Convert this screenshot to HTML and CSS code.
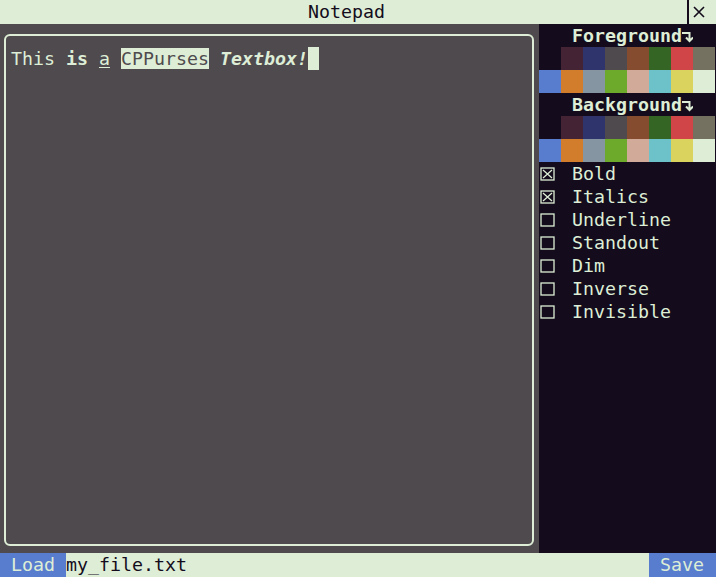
FILE: index.html
```html
<!DOCTYPE html>
<html>
<head>
<meta charset="utf-8">
<link rel="stylesheet" href="styles.css">
</head>
<body>
<div class="app">
  <header class="titlebar">
    <div class="title">Notepad</div>
    <div class="close"><svg width="12" height="12" viewBox="0 0 12 12"><path d="M1 1 L11 11 M11 1 L1 11" stroke="#140c1c" stroke-width="1.6" fill="none"/></svg></div>
  </header>
  <main class="middle">
    <section class="editor">
      <div class="textbox">
        <div class="line">This <b>is</b> <u>a</u> <span class="inv">CPPurses</span> <b><i>Textbox!</i></b><span class="cursor"></span></div>
      </div>
    </section>
    <aside class="sidebar">
      <div class="heading">Foreground<svg class="arrow" width="11" height="23" viewBox="0 0 11 23"><path d="M0 9 H7.5 V17 M4 13.5 L7.5 17 L11 13.5" stroke="#deeed6" stroke-width="2" fill="none"/></svg></div>
      <div class="palette">
        <span class="c0"></span><span class="c1"></span><span class="c2"></span><span class="c3"></span>
        <span class="c4"></span><span class="c5"></span><span class="c6"></span><span class="c7"></span>
        <span class="c8"></span><span class="c9"></span><span class="c10"></span><span class="c11"></span>
        <span class="c12"></span><span class="c13"></span><span class="c14"></span><span class="c15"></span>
      </div>
      <div class="heading">Background<svg class="arrow" width="11" height="23" viewBox="0 0 11 23"><path d="M0 9 H7.5 V17 M4 13.5 L7.5 17 L11 13.5" stroke="#deeed6" stroke-width="2" fill="none"/></svg></div>
      <div class="palette">
        <span class="c0"></span><span class="c1"></span><span class="c2"></span><span class="c3"></span>
        <span class="c4"></span><span class="c5"></span><span class="c6"></span><span class="c7"></span>
        <span class="c8"></span><span class="c9"></span><span class="c10"></span><span class="c11"></span>
        <span class="c12"></span><span class="c13"></span><span class="c14"></span><span class="c15"></span>
      </div>
      <ul class="checks">
        <li><svg class="box" width="15" height="14" viewBox="0 0 15 14"><rect x="1" y="1" width="13" height="12" stroke="#deeed6" stroke-width="1.3" fill="none"/><path d="M3 3 L12 11 M12 3 L3 11" stroke="#deeed6" stroke-width="1.3"/></svg><span class="label">Bold</span></li>
        <li><svg class="box" width="15" height="14" viewBox="0 0 15 14"><rect x="1" y="1" width="13" height="12" stroke="#deeed6" stroke-width="1.3" fill="none"/><path d="M3 3 L12 11 M12 3 L3 11" stroke="#deeed6" stroke-width="1.3"/></svg><span class="label">Italics</span></li>
        <li><svg class="box" width="15" height="14" viewBox="0 0 15 14"><rect x="1" y="1" width="13" height="12" stroke="#deeed6" stroke-width="1.3" fill="none"/></svg><span class="label">Underline</span></li>
        <li><svg class="box" width="15" height="14" viewBox="0 0 15 14"><rect x="1" y="1" width="13" height="12" stroke="#deeed6" stroke-width="1.3" fill="none"/></svg><span class="label">Standout</span></li>
        <li><svg class="box" width="15" height="14" viewBox="0 0 15 14"><rect x="1" y="1" width="13" height="12" stroke="#deeed6" stroke-width="1.3" fill="none"/></svg><span class="label">Dim</span></li>
        <li><svg class="box" width="15" height="14" viewBox="0 0 15 14"><rect x="1" y="1" width="13" height="12" stroke="#deeed6" stroke-width="1.3" fill="none"/></svg><span class="label">Inverse</span></li>
        <li><svg class="box" width="15" height="14" viewBox="0 0 15 14"><rect x="1" y="1" width="13" height="12" stroke="#deeed6" stroke-width="1.3" fill="none"/></svg><span class="label">Invisible</span></li>
      </ul>
    </aside>
  </main>
  <footer class="bottombar">
    <div class="btn">Load</div>
    <div class="filename">my_file.txt</div>
    <div class="btn save">Save</div>
  </footer>
</div>
</body>
</html>
```
FILE: styles.css
```css
* { box-sizing: border-box; }
html, body {
  margin: 0;
  padding: 0;
  background: #4e4a4e;
}
body {
  font-family: "DejaVu Sans Mono", monospace;
  font-size: 18.27px;
  line-height: 23px;
  color: #deeed6;
}
.app {
  width: 716px;
  height: 577px;
  display: flex;
  flex-direction: column;
  overflow: hidden;
}
.titlebar {
  height: 24px;
  display: flex;
  background: #deeed6;
  color: #140c1c;
}
.title {
  flex: 1;
  text-align: center;
  padding-left: 6px;
  line-height: 24px;
}
.close {
  width: 29px;
  border-left: 2px solid #140c1c;
  padding-left: 4px;
  display: flex;
  align-items: center;
}
.middle {
  flex: 1;
  display: flex;
  min-height: 0;
}
.editor {
  width: 539px;
  background: #4e4a4e;
  padding: 10px 5px 7px 4px;
  display: flex;
}
.textbox {
  flex: 1;
  border: 2px solid #deeed6;
  border-radius: 6px;
  padding: 11px 0 0 5px;
}
.line {
  white-space: pre;
  height: 23px;
}
.line b { font-weight: bold; }
.line u { text-decoration: underline; text-underline-offset: 2px; }
.inv {
  background: #deeed6;
  color: #4e4a4e;
}
.cursor {
  display: inline-block;
  width: 11px;
  height: 23px;
  vertical-align: top;
  background: #deeed6;
}
.sidebar {
  width: 177px;
  background: #140c1c;
}
.heading {
  height: 23px;
  padding-left: 33px;
  font-weight: bold;
  white-space: pre;
  display: flex;
}
.arrow { display: block; }
.palette {
  display: grid;
  grid-template-columns: repeat(8, 22px);
  grid-auto-rows: 23px;
}
.c0 { background: #140c1c; }
.c1 { background: #442434; }
.c2 { background: #30346d; }
.c3 { background: #4e4a4e; }
.c4 { background: #854c30; }
.c5 { background: #346524; }
.c6 { background: #d04648; }
.c7 { background: #757161; }
.c8 { background: #597dce; }
.c9 { background: #d27d2c; }
.c10 { background: #8595a1; }
.c11 { background: #6daa2c; }
.c12 { background: #d2aa99; }
.c13 { background: #6dc2ca; }
.c14 { background: #dad45e; }
.c15 { background: #deeed6; }
.checks {
  list-style: none;
  margin: 0;
  padding: 0;
}
.checks li {
  height: 23px;
  display: flex;
  align-items: center;
  white-space: pre;
}
.box {
  display: block;
  margin-left: 1px;
  margin-right: 17px;
  flex: none;
}
.bottombar {
  height: 24px;
  display: flex;
  background: #deeed6;
  line-height: 24px;
}
.btn {
  width: 66px;
  padding-left: 11px;
  background: #597dce;
  color: #deeed6;
}
.save { width: 67px; }
.filename {
  flex: 1;
  color: #140c1c;
}
```
